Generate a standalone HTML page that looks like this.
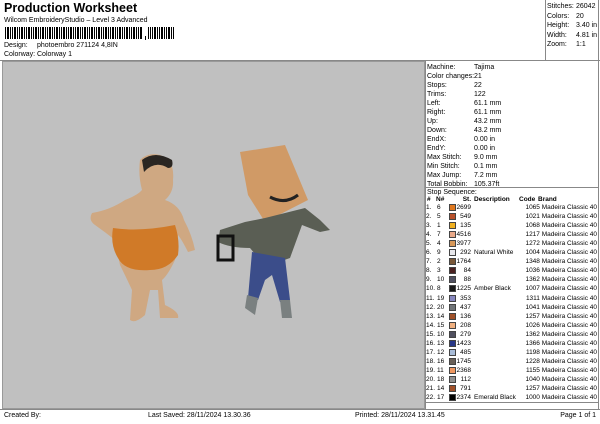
<!DOCTYPE html>
<html><head><meta charset="utf-8"><style>
*{margin:0;padding:0;box-sizing:border-box}
body{width:600px;height:424px;background:#fff;font-family:"Liberation Sans",Arial,sans-serif;color:#000;position:relative;overflow:hidden;font-size:7px}
.a{position:absolute;white-space:nowrap}
.row{position:absolute;left:426px;height:9px;width:172px;font-size:6.5px;line-height:9px}
.row span{position:absolute}
.sw{width:7px;height:7px;top:1px;left:23px;border:0.5px solid #444}
</style></head><body>
<div class="a" style="left:4px;top:1px;font-size:12.5px;font-weight:bold">Production Worksheet</div>
<div class="a" style="left:4px;top:17px;font-size:7px">Wilcom EmbroideryStudio – Level 3 Advanced</div>
<div class="a" style="left:5px;top:27px;width:170px;height:12px;background:repeating-linear-gradient(90deg,#000 0 1px,#fff 1px 2px,#000 2px 3px,#000 3px 4px,#fff 4px 5px,#000 5px 6px,#fff 6px 7px)"></div>
<div class="a" style="left:143px;top:27px;width:5px;height:13px;background:#fff"></div>
<div class="a" style="left:145px;top:36px;width:1px;height:4px;background:#000"></div>
<div class="a" style="left:4px;top:42px">Design:</div><div class="a" style="left:37px;top:42px">photoembro 271124 4,8IN</div>
<div class="a" style="left:4px;top:51px">Colorway:</div><div class="a" style="left:37px;top:51px">Colorway 1</div>
<div class="a" style="left:545px;top:0;width:1px;height:60px;background:#888"></div>
<div class="a" style="left:598px;top:0;width:1px;height:410px;background:#888"></div>
<div class="a" style="left:547px;top:2px;line-height:9.5px">Stitches:<br>Colors:<br>Height:<br>Width:<br>Zoom:</div>
<div class="a" style="left:576px;top:2px;line-height:9.5px">26042<br>20<br>3.40 in<br>4.81 in<br>1:1</div>
<div class="a" style="left:0;top:60px;width:600px;height:1px;background:#888"></div>
<div class="a" style="left:2px;top:61px;width:423px;height:348px;background:#c0c0c0;border:1px solid #999"></div>
<svg class="a" style="left:80px;top:140px" width="260" height="190" viewBox="0 0 260 190">
<path d="M60 20 Q68 12 80 15 Q95 20 93 40 Q94 52 85 60 Q100 65 104 80 Q112 95 115 110 L108 112 Q102 100 98 95 L95 120 Q88 135 82 140 L85 165 Q100 172 98 178 L80 178 L78 150 L70 150 L65 175 Q55 184 50 180 L52 150 Q45 135 40 125 L35 100 Q25 92 15 85 Q8 80 12 73 Q30 70 45 60 Q58 55 62 50 Q58 35 60 20Z" fill="#cfa882"/>
<path d="M62 20 Q75 10 92 20 Q94 28 88 28 Q75 20 64 32Z" fill="#2a2622"/>
<path d="M33 88 Q60 92 95 85 Q100 100 98 115 Q88 130 70 130 Q45 132 38 118 Q30 105 33 88Z" fill="#d07a28"/>
<path d="M160 12 L205 5 L228 60 L185 82 L168 55Z" fill="#d09a66"/>
<path d="M190 57 Q205 65 218 55" stroke="#222" stroke-width="3" fill="none"/>
<path d="M165 82 L185 78 L225 68 L240 80 L250 90 L240 92 L222 85 L210 118 L190 125 L180 120 L170 108 Q150 108 138 102 L140 90 Z" fill="#5a5e54"/>
<path d="M172 112 L205 118 L210 160 L200 162 L192 135 L185 140 L178 160 L168 158 Z" fill="#3b4d8a"/>
<path d="M167 155 L178 158 L175 175 L165 168Z M200 160 L210 160 L212 178 L202 178Z" fill="#7a8080"/>
<rect x="138" y="96" width="15" height="24" fill="none" stroke="#111" stroke-width="3"/>
</svg>
<div class="a" style="left:425px;top:61px;width:1px;height:349px;background:#888"></div>
<div class="a" style="left:427px;top:63px;line-height:9px">Machine:<br>Color changes:<br>Stops:<br>Trims:<br>Left:<br>Right:<br>Up:<br>Down:<br>EndX:<br>EndY:<br>Max Stitch:<br>Min Stitch:<br>Max Jump:<br>Total Bobbin:</div>
<div class="a" style="left:474px;top:63px;line-height:9px">Tajima<br>21<br>22<br>122<br>61.1 mm<br>61.1 mm<br>43.2 mm<br>43.2 mm<br>0.00 in<br>0.00 in<br>9.0 mm<br>0.1 mm<br>7.2 mm<br>105.37ft</div>
<div class="a" style="left:426px;top:187px;width:172px;height:1px;background:#888"></div>
<div class="a" style="left:427px;top:188px;line-height:9px">Stop Sequence:</div>
<div class="row" style="top:195px;font-weight:bold;text-decoration:underline"><span style="left:1px">#</span><span style="left:10px">N#</span><span style="right:127px">St.</span><span style="left:48px">Description</span><span style="left:93px">Code</span><span style="left:112px">Brand</span></div>
<div id="rows"></div>
<script>
var d=[[6,"#e0781e",2699,"",1065],[5,"#b8502a",549,"",1021],[1,"#f0b020",135,"",1068],[7,"#e8a888",4516,"",1217],[4,"#d89858",3977,"",1272],[9,"#e8e8ec",292,"Natural White",1004],[2,"#7a5838",1764,"",1348],[3,"#4a2020",84,"",1036],[10,"#505060",88,"",1362],[8,"#181818",1225,"Amber Black",1007],[19,"#8888c0",353,"",1311],[20,"#707478",437,"",1041],[14,"#a05028",136,"",1257],[15,"#f0b080",208,"",1026],[10,"#505060",279,"",1362],[13,"#283888",1423,"",1366],[12,"#a8bcd8",485,"",1198],[16,"#686058",1745,"",1228],[11,"#f09860",2368,"",1155],[18,"#909090",112,"",1040],[14,"#a05028",791,"",1257],[17,"#000",2374,"Emerald Black",1000]];
var h="";d.forEach(function(r,i){h+='<div class="row" style="top:'+(203+i*9.05)+'px"><span style="left:0px">'+(i+1)+'.</span><span style="left:11px">'+r[0]+'</span><span class="sw" style="background:'+r[1]+'"></span><span style="right:127px">'+r[2]+'</span><span style="left:48px">'+r[3]+'</span><span style="right:1px">'+r[4]+' Madeira Classic 40</span></div>'});
document.getElementById("rows").innerHTML=h;
</script>
<div class="a" style="left:426px;top:402px;width:172px;height:1px;background:#888"></div>
<div class="a" style="left:0;top:409px;width:600px;height:1px;background:#888"></div>
<div class="a" style="left:4px;top:412px">Created By:</div>
<div class="a" style="left:148px;top:412px">Last Saved: 28/11/2024 13.30.36</div>
<div class="a" style="left:355px;top:412px">Printed: 28/11/2024 13.31.45</div>
<div class="a" style="right:4px;top:412px">Page 1 of 1</div>
</body></html>
